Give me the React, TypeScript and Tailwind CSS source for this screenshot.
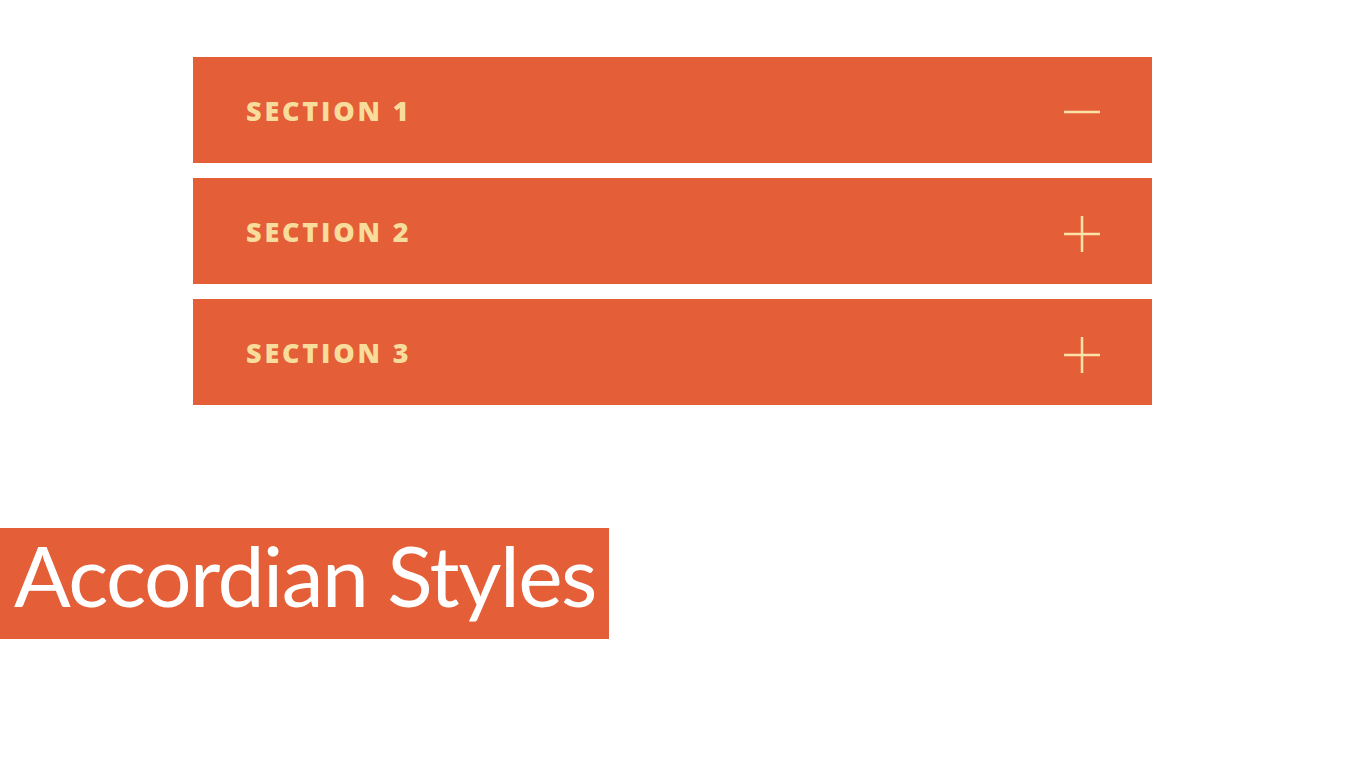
const sections = [
  { label: "SECTION 1", open: true },
  { label: "SECTION 2", open: false },
  { label: "SECTION 3", open: false },
];

const Toggle = ({ open }: { open: boolean }) => (
  <svg width="38" height="38" viewBox="0 0 38 38" className="mt-[6px] shrink-0">
    <line x1="1" y1={open ? 18 : 19} x2="37" y2={open ? 18 : 19} stroke="#fbe2a6" strokeWidth="2.5" />
    {!open && <line x1="19" y1="1" x2="19" y2="37" stroke="#fbe2a6" strokeWidth="2.5" />}
  </svg>
);

export default function App() {
  return (
    <div className="h-[768px] w-[1366px] overflow-hidden bg-white">
      <div className="box-content flex w-[959px] flex-col gap-[15px] pl-[193px] pt-[57px]">
        {sections.map((s) => (
          <div
            key={s.label}
            className="flex h-[106px] items-center justify-between bg-[#e45e37] pl-[53px] pr-[51px]"
          >
            <span
              className="pt-[3px] text-[27px] font-extrabold tracking-[2.8px] text-[#f7dc9c]"
              style={{ fontFamily: '"Open Sans", "Noto Sans", sans-serif' }}
            >
              {s.label}
            </span>
            <Toggle open={s.open} />
          </div>
        ))}
      </div>
      <div className="mt-[123px] flex h-[111px] w-[609px] items-start bg-[#e45e37] pl-[14px] pt-[1px]">
        <span
          className="whitespace-nowrap text-[84px] leading-[92px] tracking-[-1.5px] text-white"
          style={{ fontFamily: "Lato, sans-serif" }}
        >
          Accordian Styles
        </span>
      </div>
    </div>
  );
}
